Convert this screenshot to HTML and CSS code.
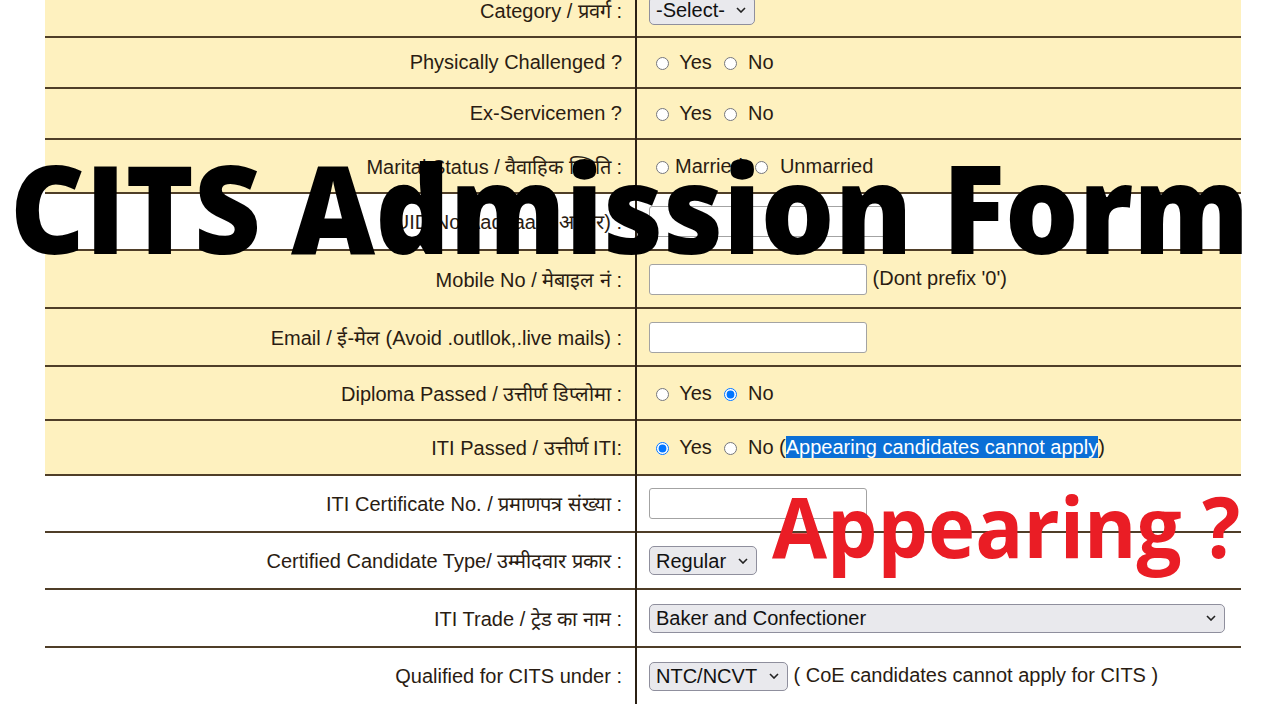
FILE: index.html
```html
<!DOCTYPE html>
<html lang="en">
<head>
  <meta charset="UTF-8" />
  <meta name="viewport" content="width=device-width, initial-scale=1" />
  <title>CITS Admission Form</title>
  <link rel="stylesheet" href="styles.css">
</head>
<body>
  <div class="page">

    <table class="form-table">
      <tr class="row-first">
        <td class="label">Category / प्रवर्ग :</td>
        <td class="field">
          <span class="pick">
            <select><option>-Select-</option><option>GEN</option><option>OBC</option><option>SC</option><option>ST</option></select>
            <svg class="chev" width="10" height="6" viewBox="0 0 10 6"><path d="M1 1l4 4 4-4" /></svg>
          </span>
        </td>
      </tr>
      <tr class="row-radio">
        <td class="label">Physically Challenged ?</td>
        <td class="field"><input type="radio" name="ph"> Yes <input type="radio" name="ph"> No</td>
      </tr>
      <tr class="row-radio">
        <td class="label">Ex-Servicemen ?</td>
        <td class="field"><input type="radio" name="ex"> Yes <input type="radio" name="ex"> No</td>
      </tr>
      <tr class="row-radio-wide">
        <td class="label">Marital Status / वैवाहिक स्थिति :</td>
        <td class="field marital"><input type="radio" name="ms">Married <input type="radio" name="ms"> Unmarried</td>
      </tr>
      <tr class="row-select plain">
        <td class="label">UID No(Aadhaar / आधार) :</td>
        <td class="field"><input type="text" class="text-box uid"></td>
      </tr>
      <tr class="row-input">
        <td class="label">Mobile No / मेबाइल नं :</td>
        <td class="field"><input type="text" class="text-box"> (Dont prefix '0')</td>
      </tr>
      <tr class="row-input">
        <td class="label">Email / ई-मेल (Avoid .outllok,.live mails) :</td>
        <td class="field"><input type="text" class="text-box"></td>
      </tr>
      <tr class="row-radio-wide">
        <td class="label">Diploma Passed / उत्तीर्ण डिप्लोमा :</td>
        <td class="field"><input type="radio" name="dp"> Yes <input type="radio" name="dp" checked> No</td>
      </tr>
      <tr class="row-radio-tall">
        <td class="label">ITI Passed / उत्तीर्ण ITI:</td>
        <td class="field"><input type="radio" name="iti" checked> Yes <input type="radio" name="iti"> No (<span class="marked">Appearing candidates cannot apply</span>)</td>
      </tr>
      <tr class="row-select plain">
        <td class="label">ITI Certificate No. / प्रमाणपत्र संख्या :</td>
        <td class="field"><input type="text" class="text-box"></td>
      </tr>
      <tr class="row-select plain">
        <td class="label">Certified Candidate Type/ उम्मीदवार प्रकार :</td>
        <td class="field">
          <span class="pick">
            <select><option>Regular</option><option>Private</option></select>
            <svg class="chev" width="10" height="6" viewBox="0 0 10 6"><path d="M1 1l4 4 4-4" /></svg>
          </span>
        </td>
      </tr>
      <tr class="row-input plain">
        <td class="label">ITI Trade / ट्रेड का नाम :</td>
        <td class="field">
          <span class="pick">
            <select class="wide"><option>Baker and Confectioner</option><option>Carpenter</option><option>Electrician</option></select>
            <svg class="chev" width="10" height="6" viewBox="0 0 10 6"><path d="M1 1l4 4 4-4" /></svg>
          </span>
        </td>
      </tr>
      <tr class="row-select plain last">
        <td class="label">Qualified for CITS under :</td>
        <td class="field">
          <span class="pick">
            <select><option>NTC/NCVT</option><option>STC/SCVT</option></select>
            <svg class="chev" width="10" height="6" viewBox="0 0 10 6"><path d="M1 1l4 4 4-4" /></svg>
          </span>
          ( CoE candidates cannot apply for CITS )
        </td>
      </tr>
    </table>

    <div class="banner">CITS Admission Form</div>
    <div class="callout">Appearing ?</div>

  </div>
</body>
</html>
```

FILE: styles.css
```css
body {
  margin: 0;
  background: #fff;
  overflow: hidden;
  height: 100vh;
}

.page {
  position: relative;
  height: 720px;
}

.form-table {
  border-collapse: collapse;
  width: 1196px;
  margin: -16px 0 0 45px;
  font-family: "Liberation Sans", Arial, sans-serif;
  font-size: 20px;
  color: #2a1c12;
}

.form-table tr {
  background: #fef1bf;
  border-bottom: 2px solid #4f3e28;
}

.form-table tr.plain { background: #fff; }
.form-table tr.last { border-bottom: none; }

.row-first { height: 53px; }
.row-radio { height: 51px; }
.row-radio-wide { height: 54px; }
.row-radio-tall { height: 55px; }
.row-select { height: 57px; }
.row-input { height: 58px; }

.label {
  width: 577px;
  padding: 0 13px 0 0;
  text-align: right;
  border-right: 2px solid #2b2014;
  white-space: nowrap;
}

.field {
  padding: 0 0 0 12px;
  white-space: nowrap;
}

.field input[type="radio"] {
  margin: 0 5px 0 7px;
  vertical-align: -1px;
}

.marital input[type="radio"] {
  margin-right: 6px;
}

.text-box {
  width: 218px;
  height: 31px;
  box-sizing: border-box;
  border: 1px solid #a3a3a3;
  border-radius: 3px;
  background: #fff;
  vertical-align: middle;
  font: inherit;
}

.text-box.uid { width: 250px; }

/* selects drawn flat, the arrow sits over the right end */
.pick {
  position: relative;
  display: inline-block;
  vertical-align: middle;
}

.pick select {
  appearance: none;
  -webkit-appearance: none;
  height: 29px;
  padding: 0 29px 0 6px;
  border: 1px solid #8f8f9d;
  border-radius: 5px;
  background: #e9e9ed;
  font-family: "Liberation Sans", Arial, sans-serif;
  font-size: 20px;
  color: #111;
  display: block;
}

.pick select.wide { width: 576px; }

.chev {
  position: absolute;
  right: 9px;
  top: 50%;
  margin-top: -3px;
  pointer-events: none;
}

.chev path {
  fill: none;
  stroke: #222;
  stroke-width: 1.6;
}

.marked {
  background: #0b6fd6;
  color: #fff;
}

.banner, .callout {
  position: absolute;
  font-family: "Open Sans", sans-serif;
  font-weight: 700;
  line-height: 1;
  white-space: nowrap;
  transform-origin: 0 0;
}

.banner {
  left: 10px;
  top: 162px;
  font-size: 122px;
  font-weight: 800;
  color: #000;
  transform: scaleX(0.95);
}

.callout {
  left: 772px;
  top: 500px;
  font-size: 84px;
  color: #ea1d25;
  transform: scaleX(0.95);
}
```
